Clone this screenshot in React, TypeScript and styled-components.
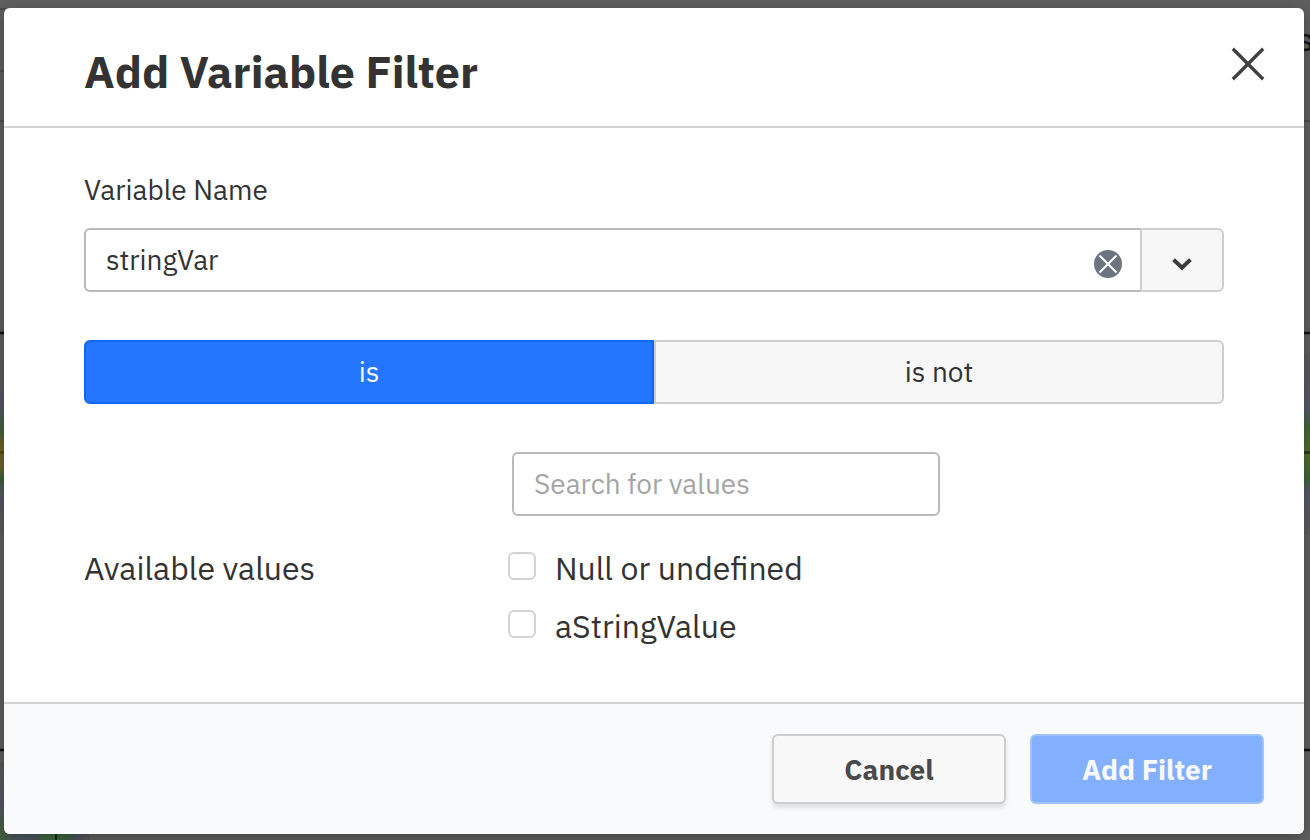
import React from 'react';
import styled, { createGlobalStyle, css } from 'styled-components';

const GlobalStyle = createGlobalStyle`
  * { box-sizing: border-box; }
  html, body { margin: 0; height: 100%; overflow: hidden; }
  body, button, input {
    font-family: "IBM Plex Sans", Roboto, "Liberation Sans", sans-serif;
  }
`;

const Page = styled.div`
  position: relative;
  width: 1310px;
  height: 840px;
  padding: 8px 6px 6px 4px;
  overflow: hidden;
  background: #5f5f5f;
`;

const DiagramLayer = styled.svg`
  position: absolute;
  inset: 0;
  width: 100%;
  height: 100%;
`;

const Dialog = styled.section`
  position: relative;
  display: flex;
  flex-direction: column;
  height: 826px;
  border-radius: 6px;
  background: #fff;
  color: #333;
  overflow: hidden;
`;

const DialogShadow = styled.div`
  border-radius: 6px;
  position: relative;
  box-shadow: 0 4px 16px rgba(0, 0, 0, 0.28);
`;

const Header = styled.header`
  display: flex;
  justify-content: space-between;
  height: 120px;
  padding: 33px 38px 0 80px;
  border-bottom: 2px solid #d3d3d3;
`;

const Title = styled.h1`
  margin: 0;
  font-size: 44.8px;
  line-height: 60px;
  font-weight: 700;
  white-space: nowrap;
`;

const CloseButton = styled.button`
  width: 36px;
  height: 36px;
  margin-top: 5px;
  padding: 0;
  border: 0;
  background: none;
  svg { display: block; }
`;

const Body = styled.div`
  flex: 1;
  padding: 39px 80px 0;
`;

const FieldLabel = styled.label`
  display: block;
  height: 46px;
  margin-bottom: 15px;
  font-size: 28px;
  line-height: 46px;
`;

const Combo = styled.div`
  display: flex;
  height: 64px;
`;

const inputBox = css`
  display: flex;
  align-items: center;
  height: 64px;
  border: 2px solid #b9b9b9;
  border-radius: 6px;
  padding: 0 0 2px 20px;
  font-size: 28px;
  color: #333;
  background: #fff;
`;

const ComboInput = styled.div`
  ${inputBox}
  flex: 1;
  justify-content: space-between;
  border-right: 0;
  border-radius: 6px 0 0 6px;
  padding-right: 18px;
  svg { display: block; margin-top: 10px; }
`;

const ComboToggle = styled.button`
  display: flex;
  align-items: center;
  justify-content: center;
  width: 84px;
  padding: 8px 0 0;
  border: 2px solid #cdcdcd;
  border-radius: 0 6px 6px 0;
  background: #f7f7f7;
`;

const Segments = styled.div`
  display: flex;
  height: 64px;
  margin-top: 48px;
`;

const Segment = styled.button<{ $active?: boolean }>`
  flex: 1;
  padding: 0 0 1px;
  font-size: 28px;
  border: 2px solid ${p => (p.$active ? '#1066f5' : '#cdcdcd')};
  border-radius: ${p => (p.$active ? '6px 0 0 6px' : '0 6px 6px 0')};
  background: ${p => (p.$active ? '#2475ff' : '#f7f7f7')};
  color: ${p => (p.$active ? '#f8f8f8' : '#333')};
`;

const SearchField = styled.input`
  ${inputBox}
  display: block;
  width: 428px;
  margin: 48px 0 0 428px;
  outline: 0;
  &::placeholder { color: #a5a5a5; opacity: 1; }
`;

const ValuesRow = styled.div`
  display: grid;
  grid-template-columns: 424px 1fr;
  margin-top: 23px;
  font-size: 32px;
  line-height: 58px;
`;

const ValueList = styled.div`
  display: flex;
  flex-direction: column;
`;

const ValueOption = styled.label`
  display: flex;
  height: 58px;
  gap: 19px;
`;

const CheckBox = styled.span`
  width: 28px;
  height: 28px;
  margin-top: 13px;
  border: 2px solid #d3d3d3;
  border-radius: 6px;
`;

const Footer = styled.footer`
  display: flex;
  justify-content: flex-end;
  gap: 24px;
  height: 132px;
  padding: 30px 40px 0;
  border-top: 2px solid #d3d3d3;
  background: #f9fafc;
`;

const ActionButton = styled.button<{ $primary?: boolean }>`
  width: 234px;
  height: 70px;
  padding: 1px 0 0;
  border: 2px solid ${p => (p.$primary ? '#9fc3ff' : '#cdcdcd')};
  border-radius: 6px;
  background: ${p => (p.$primary ? '#82b0ff' : '#f8f8f8')};
  color: ${p => (p.$primary ? '#f8f9fc' : '#4a4a4a')};
  font-size: 28px;
  font-weight: 700;
  box-shadow: ${p => (p.$primary ? 'none' : '0 4px 4px rgba(0, 0, 0, 0.1)')};
`;

const Heatmap = () => (
  <DiagramLayer viewBox="0 0 1310 840">
    <defs>
      <linearGradient id="heatLeft" x1="0" y1="0" x2="0" y2="1">
        <stop offset="0" stopColor="#5b5a58" />
        <stop offset="0.28" stopColor="#555663" />
        <stop offset="0.4" stopColor="#3d613a" />
        <stop offset="0.5" stopColor="#736128" />
        <stop offset="0.6" stopColor="#6b6329" />
        <stop offset="0.68" stopColor="#3c623a" />
        <stop offset="0.77" stopColor="#555663" />
        <stop offset="1" stopColor="#5b5a58" />
      </linearGradient>
      <linearGradient id="heatRight" x1="0" y1="0" x2="0" y2="1">
        <stop offset="0" stopColor="#5c5c5c" />
        <stop offset="0.3" stopColor="#55576a" />
        <stop offset="0.4" stopColor="#3c673a" />
        <stop offset="0.54" stopColor="#546b30" />
        <stop offset="0.69" stopColor="#3c673a" />
        <stop offset="0.76" stopColor="#55576a" />
        <stop offset="1" stopColor="#5c5c5c" />
      </linearGradient>
      <linearGradient id="heatBottom" x1="0" y1="0" x2="1" y2="0">
        <stop offset="0" stopColor="#40613c" />
        <stop offset="0.17" stopColor="#4b5460" />
        <stop offset="0.38" stopColor="#4b5460" />
        <stop offset="0.5" stopColor="#3c663a" />
        <stop offset="0.75" stopColor="#3c623e" />
        <stop offset="0.85" stopColor="#4c5064" />
        <stop offset="1" stopColor="#5b5a58" />
      </linearGradient>
      <linearGradient id="heatCorner" x1="0" y1="0" x2="0" y2="1">
        <stop offset="0" stopColor="#5b5a58" />
        <stop offset="0.6" stopColor="#535566" />
        <stop offset="1" stopColor="#40613c" />
      </linearGradient>
    </defs>
    <rect y="8" width="5" height="832" fill="#5f5e5b" />
    <rect y="360" width="5" height="175" fill="url(#heatLeft)" />
    <rect x="1303" y="355" width="7" height="180" fill="url(#heatRight)" />
    <rect y="762" width="5" height="72" fill="url(#heatCorner)" />
    <rect y="833" width="90" height="7" fill="url(#heatBottom)" />
    <path d="M0 9H5M0 71H5M0 121H5M1303 121H1310" stroke="#4b4b4b" strokeWidth="2" />
    <path d="M0 333H5M1303 333H1310M0 750H5M1303 750H1310" stroke="#111" strokeWidth="2.5" />
    <path d="M0 452.5H5" stroke="#51431c" strokeWidth="2.5" />
    <path d="M1303 452.5H1310" stroke="#293518" strokeWidth="2.5" />
    <path d="M56 833V840" stroke="#132711" strokeWidth="2" />
    <text x="1297" y="50.5" fontFamily="Roboto, sans-serif" fontSize="32" fill="#151515">s</text>
  </DiagramLayer>
);

export default function App() {
  return (
    <Page>
      <GlobalStyle />
      <Heatmap />
      <DialogShadow>
        <Dialog role="dialog" aria-label="Add Variable Filter">
          <Header>
            <Title>Add Variable Filter</Title>
            <CloseButton aria-label="Close">
              <svg width="36" height="36" viewBox="0 0 36 36">
                <path d="M2.8 2.8 33.2 33.2M33.2 2.8 2.8 33.2" stroke="#404040" strokeWidth="3.4" />
              </svg>
            </CloseButton>
          </Header>
          <Body>
            <FieldLabel>Variable Name</FieldLabel>
            <Combo>
              <ComboInput>
                stringVar
                <svg width="28" height="28" viewBox="0 0 28 28">
                  <circle cx="14" cy="14" r="14" fill="#6c7480" />
                  <path d="M5.5 5.5 22.5 22.5M22.5 5.5 5.5 22.5" stroke="#fff" strokeWidth="1.9" />
                </svg>
              </ComboInput>
              <ComboToggle aria-label="Open">
                <svg width="20" height="14" viewBox="0 0 20 14">
                  <path d="M1.6 2.6 10 10.8 18.4 2.6" fill="none" stroke="#3b3b3b" strokeWidth="4" />
                </svg>
              </ComboToggle>
            </Combo>
            <Segments>
              <Segment $active>is</Segment>
              <Segment>is not</Segment>
            </Segments>
            <SearchField placeholder="Search for values" />
            <ValuesRow>
              <div>Available values</div>
              <ValueList>
                <ValueOption><CheckBox />Null or undefined</ValueOption>
                <ValueOption><CheckBox />aStringValue</ValueOption>
              </ValueList>
            </ValuesRow>
          </Body>
          <Footer>
            <ActionButton>Cancel</ActionButton>
            <ActionButton $primary>Add Filter</ActionButton>
          </Footer>
        </Dialog>
      </DialogShadow>
    </Page>
  );
}
